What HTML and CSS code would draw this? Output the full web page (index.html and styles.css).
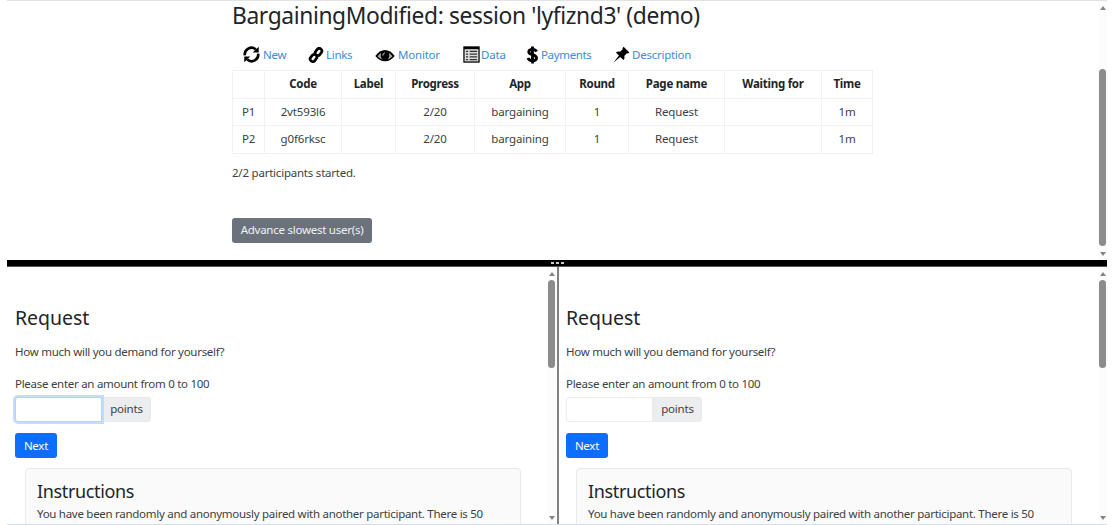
FILE: index.html
```html
<!DOCTYPE html>
<html lang="en">
<head>
<meta charset="utf-8">
<title>BargainingModified: session</title>
<link rel="stylesheet" href="styles.css">
</head>
<body>
<div class="frames">
  <section class="frame admin">
    <div class="admin-body">
      <h2 class="session-title">BargainingModified: session 'lyfiznd3' (demo)</h2>
      <nav class="tabs">
        <a class="tab tab-new"><svg class="icon" viewBox="0 0 16 16"><path d="M1.700 8.800A6.300 6.300 0 0 1 12 3.200M14.300 7.200A6.300 6.300 0 0 1 4 12.800" fill="none" stroke="#000" stroke-width="2.500"/><path d="M14.800.6v5.600H9.200zM1.200 15.400V9.800h5.600z"/></svg>New</a>
        <a class="tab tab-links"><svg class="icon link" viewBox="0 0 16 16"><g fill="none" stroke="#000" stroke-width="2.700"><rect x="-2.600" y="-3.800" width="5.200" height="7.600" rx="2.600" transform="translate(10.500 5) rotate(38)"/><rect x="-2.600" y="-3.800" width="5.200" height="7.600" rx="2.600" transform="translate(5.500 11) rotate(38)"/></g></svg>Links</a>
        <a class="tab tab-monitor"><svg class="icon eye" viewBox="0 0 20 16"><path d="M.3 9C3 5 6.500 3 10 3s7 2 9.700 6C17 12.600 13.500 14.300 10 14.300S3 12.600.3 9z"/><path d="M2.600 9.200C4.200 7.200 5 6.500 6.200 6c-1 2.500-.5 5 1.300 6.500-2-.5-3.700-1.700-4.900-3.300zM17.400 9.200c-1.600-2-2.400-2.700-3.600-3.200 1 2.500.5 5-1.300 6.500 2-.5 3.700-1.700 4.900-3.300z" fill="#aaa"/><path d="M7.900 8.500c0-1.500.8-2.300 1.900-2.500" fill="none" stroke="#fff" stroke-width=".9"/></svg>Monitor</a>
        <a class="tab tab-data"><svg class="icon" viewBox="0 0 16 16"><path d="M.3.300h15.400v15.400H.3z"/><path d="M1.500 3h13v11.500h-13z" fill="#ddd"/><path d="M2.800 5h2m1.500 0h7M2.800 7.600h2m1.500 0h7M2.800 10.200h2m1.500 0h7M2.800 12.800h2m1.500 0h7" stroke="#333" stroke-width="1.200"/></svg>Data</a>
        <a class="tab tab-payments"><svg class="icon dollar" viewBox="0 0 12 18"><path d="M10 5.600C9.300 4 8 3.400 6 3.400c-2.300 0-3.700.8-3.700 2.500C2.300 9.400 10 7.700 10 12c0 1.800-1.600 2.700-4 2.700-2.300 0-3.800-.8-4.500-2.700M6 .5v17" fill="none" stroke="#000" stroke-width="2.900"/></svg>Payments</a>
        <a class="tab tab-description"><svg class="icon" viewBox="0 0 16 16"><path d="M10 .8 15.400 6l-1.300 1.100-1-.2-2.500 2.500c.5 1.500.3 2.700-.7 3.800L6.800 10.300.5 15.500 5.600 9 2.800 6.200c1.200-1 2.400-1.200 3.900-.7l2.400-2.400-.2-1.100z"/></svg>Description</a>
      </nav>
      <table class="monitor">
        <colgroup><col class="c-id"><col class="c-code"><col class="c-label"><col class="c-progress"><col class="c-app"><col class="c-round"><col class="c-page"><col class="c-waiting"><col class="c-time"></colgroup>
        <tr><th></th><th>Code</th><th>Label</th><th>Progress</th><th>App</th><th>Round</th><th>Page name</th><th>Waiting for</th><th>Time</th></tr>
        <tr><td>P1</td><td>2vt593l6</td><td></td><td>2/20</td><td>bargaining</td><td>1</td><td>Request</td><td></td><td>1m</td></tr>
        <tr><td>P2</td><td>g0f6rksc</td><td></td><td>2/20</td><td>bargaining</td><td>1</td><td>Request</td><td></td><td>1m</td></tr>
      </table>
      <p class="started">2/2 participants started.</p>
      <button class="btn btn-secondary">Advance slowest user(s)</button>
    </div>
    <div class="scrollbar"><i class="arrow up"></i><i class="thumb"></i><i class="arrow down"></i></div>
  </section>
  <div class="splitter"><i></i><i></i><i></i></div>
  <div class="players">
    <section class="frame player">
      <div class="player-body">
        <h2 class="page-title">Request</h2>
        <p class="question">How much will you demand for yourself?</p>
        <label class="prompt">Please enter an amount from 0 to 100</label>
        <div class="input-group"><input class="amount focused" type="text"><span class="unit">points</span></div>
        <button class="btn btn-primary">Next</button>
        <div class="card"><h3 class="card-title">Instructions</h3><p class="card-text">You have been randomly and anonymously paired with another participant. There is 50</p></div>
      </div>
      <div class="scrollbar"><i class="arrow up"></i><i class="thumb"></i><i class="arrow down"></i></div>
    </section>
    <div class="divider"></div>
    <section class="frame player">
      <div class="player-body">
        <h2 class="page-title">Request</h2>
        <p class="question">How much will you demand for yourself?</p>
        <label class="prompt">Please enter an amount from 0 to 100</label>
        <div class="input-group"><input class="amount" type="text"><span class="unit">points</span></div>
        <button class="btn btn-primary">Next</button>
        <div class="card"><h3 class="card-title">Instructions</h3><p class="card-text">You have been randomly and anonymously paired with another participant. There is 50</p></div>
      </div>
      <div class="scrollbar"><i class="arrow up"></i><i class="thumb"></i><i class="arrow down"></i></div>
    </section>
  </div>
</div>
</body>
</html>
```
FILE: styles.css
```css
* { box-sizing: border-box; }
body { margin: 0; background: #fff; color: #3c3f43; font: 11.5px/18px "Noto Sans", "Open Sans", sans-serif; letter-spacing: -0.28px; overflow: hidden; }
h2, h3, p { margin: 0; font-weight: 400; }
.frames { width: 1100px; height: 525px; margin-left: 7px; display: flex; flex-direction: column; border-top: 1px solid #e2e2e2; border-bottom: 1px solid #d5dfeb; }
.frame { display: flex; min-width: 0; }
.admin { height: 259px; }
.player { overflow: hidden; }
.admin-body { flex: 1; padding-left: 225px; }
.session-title { font-size: 22.8px; line-height: 29px; color: #212529; white-space: nowrap; letter-spacing: -0.38px; }
.tabs { display: flex; height: 40px; padding: 9px 0 0 11px; align-items: center; }
.tab { display: flex; align-items: center; color: #3d8ad8; white-space: nowrap; line-height: 18px; gap: 2px; letter-spacing: -0.2px; }
.icon { width: 17px; height: 17px; fill: #000; flex: none; }
.link { width: 16px; height: 16px; }
.eye { width: 20px; height: 16px; }
.dollar { width: 13px; height: 18px; }
.tab-new { width: 65px; gap: 3px; }
.tab-links { width: 67px; gap: 2px; letter-spacing: -0.3px; }
.tab-monitor { width: 88px; gap: 3px; }
.tab-data { width: 63px; gap: 1px; }
.tab-payments { width: 87px; letter-spacing: -0.35px; }
.tab-description { letter-spacing: -0.25px; }
.monitor { width: 641px; border-collapse: collapse; table-layout: fixed; }
.monitor th, .monitor td { border: 1px solid #f1f1f2; height: 27.5px; padding: 0; text-align: center; line-height: 18px; }
.monitor td { letter-spacing: -0.15px; }
.monitor th { color: #212529; letter-spacing: -0.26px; }
.c-id { width: 32px; } .c-code { width: 77px; } .c-label { width: 54px; } .c-progress { width: 79px; } .c-app { width: 91px; } .c-round { width: 63px; } .c-page { width: 96px; } .c-waiting { width: 97px; } .c-time { width: 51px; }
.started { margin: 10px 0 36px; letter-spacing: -0.22px; }
.btn { display: block; border: 0; border-radius: 3px; color: #fff; font: inherit; letter-spacing: -0.25px; height: 25px; padding: 0; line-height: 24px; }
.btn-secondary { width: 140px; background: #6b727b; color: #f1f2f4; }
.btn-primary { width: 42px; margin-top: 11px; background: #0d6efd; }
.scrollbar { flex: none; width: 9px; display: flex; flex-direction: column; align-items: center; background: #fcfcfc; }
.arrow { width: 0; height: 0; border: 3px solid transparent; flex: none; }
.up { border-top: 0; border-bottom: 4px solid #858585; margin-top: 5px; }
.down { border-bottom: 0; border-top: 4px solid #858585; margin-top: auto; margin-bottom: 4px; }
.thumb { width: 7px; height: 88px; margin-top: 4px; border-radius: 4px; background: #8c8c8c; flex: none; }
.admin .thumb { height: 177px; margin-top: 59px; }
.splitter { height: 7px; flex: none; background: #000; border-bottom: 1px solid #555; display: flex; justify-content: center; align-items: center; gap: 2px; }
.splitter i { width: 3px; height: 2px; background: #ccc; }
.players { flex: 1; min-height: 0; display: grid; grid-template-columns: 550px 2px 548px; }
.divider { background: #818181; }
.player-body { flex: 1; min-width: 0; padding: 36px 26px 0 8px; }
.player:first-child { padding-right: 1px; }
.player:last-child .player-body { padding-left: 7px; }
.page-title { font-size: 19.5px; line-height: 30px; color: #212529; letter-spacing: -0.05px; }
.question { margin-top: 10px; }
.prompt { display: block; margin-top: 14px; }
.input-group { display: flex; height: 25px; margin-top: 4px; }
.amount { width: 87px; border: 1px solid #ececec; border-radius: 3px 0 0 3px; background: #fff; padding: 0; outline: 0; }
.focused { border-color: #b5d2fb; box-shadow: 0 0 0 2px #c6dcfb; z-index: 1; }
.unit { width: 49px; background: #ebedef; text-align: center; border-radius: 0 3px 3px 0; border: 1px solid #e6e8ea; line-height: 22px; letter-spacing: -0.2px; }
.card { margin: 10px 0 0 10px; height: 100px; padding: 10px 11px; background: #fafafa; border: 1px solid #e9e9e9; border-radius: 4px; }
.card-title { font-size: 18px; line-height: 24px; color: #212529; letter-spacing: -0.35px; }
.card-text { margin-top: 2px; white-space: nowrap; }
```
